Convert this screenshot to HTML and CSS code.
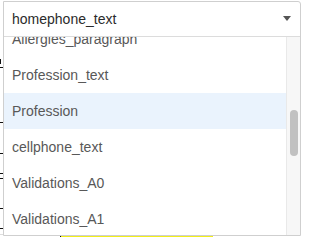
FILE: index.html
```html
<!DOCTYPE html>
<html>
<head>
<meta charset="utf-8">
<link rel="stylesheet" href="styles.css">
</head>
<body>
<div class="page">
  <div class="strip">
    <span class="mark m1"></span>
    <span class="mark m2"></span>
    <span class="mark m3"></span>
    <span class="mark m4"></span>
    <span class="mark m5"></span>
    <span class="mark m6"></span>
    <span class="mark m7"></span>
    <span class="mark m8"></span>
  </div>
  <div class="bottom">
    <span class="tick"></span>
    <span class="yellow"></span>
  </div>
</div>

<div class="dropdown">
  <div class="head">
    <span class="value">homephone_text</span>
    <span class="caret"></span>
  </div>
  <div class="body">
    <ul class="list">
      <li class="item first">Allergies_paragraph</li>
      <li class="item">Profession_text</li>
      <li class="item active">Profession</li>
      <li class="item">cellphone_text</li>
      <li class="item">Validations_A0</li>
      <li class="item">Validations_A1</li>
    </ul>
    <div class="track"><div class="thumb"></div></div>
  </div>
</div>
</body>
</html>
```

FILE: styles.css
```css
html, body {
  margin: 0;
  padding: 0;
  background: #fff;
}
body {
  width: 301px;
  height: 237px;
  overflow: hidden;
  position: relative;
  font-family: "Liberation Sans", Arial, Helvetica, sans-serif;
}

/* underlying page */
.page {
  height: 237px;
  display: flex;
  flex-direction: column;
  justify-content: space-between;
}
.strip {
  display: flex;
  flex-direction: column;
  width: 3px;
}
.mark {
  display: block;
  width: 3px;
  height: 1px;
  background: #111;
}
.m1 { margin-top: 59px; height: 5px; width: 2px; border-left: 1px solid #111; background: transparent; }
.m2 { margin-top: 3px; }
.m3 { margin-top: 54px; }
.m4 { margin-top: 30px; }
.m5 { margin-top: 19px; }
.m6 { margin-top: 4px; }
.m7 { margin-top: 29px; }
.m8 { margin-top: 19px; }

.bottom {
  display: flex;
  height: 2px;
  border-top: 1px solid #ddd;
  padding-left: 60px;
}
.tick {
  width: 1px;
  height: 2px;
  background: #111;
}
.yellow {
  width: 152px;
  height: 1px;
  margin-top: 1px;
  background: #f2ee1a;
}

/* dropdown overlay */
.dropdown {
  position: absolute;
  left: 3px;
  top: 1px;
  width: 298px;
  height: 235px;
  box-sizing: border-box;
  border: 1px solid #cfcfcf;
  border-radius: 0 3px 0 0;
  background: #fff;
  display: flex;
  flex-direction: column;
}
.head {
  height: 35px;
  box-sizing: border-box;
  border-bottom: 1px solid #dcdcdc;
  display: flex;
  align-items: center;
  justify-content: space-between;
  padding: 0 9px 1px 8px;
}
.value {
  font-size: 14px;
  color: #2b2b2b;
}
.caret {
  width: 0;
  height: 0;
  border-left: 4px solid transparent;
  border-right: 4px solid transparent;
  border-top: 5px solid #555;
}

.body {
  flex: 1;
  display: flex;
  overflow: hidden;
}
.list {
  flex: 1;
  margin: 0;
  padding: 0;
  list-style: none;
  overflow: hidden;
}
.item {
  height: 36px;
  line-height: 36px;
  padding-left: 8px;
  font-size: 14px;
  color: #585858;
  white-space: nowrap;
}
.item.first {
  margin-top: -16px;
}
.item.active {
  background: #eaf3fd;
}
.track {
  width: 13px;
  border-left: 1px solid #e9e9e9;
  background: #f7f7f7;
}
.thumb {
  width: 8px;
  height: 46px;
  margin-top: 73px;
  margin-left: 3px;
  border-radius: 4px;
  background: #c1c1c1;
}
```
